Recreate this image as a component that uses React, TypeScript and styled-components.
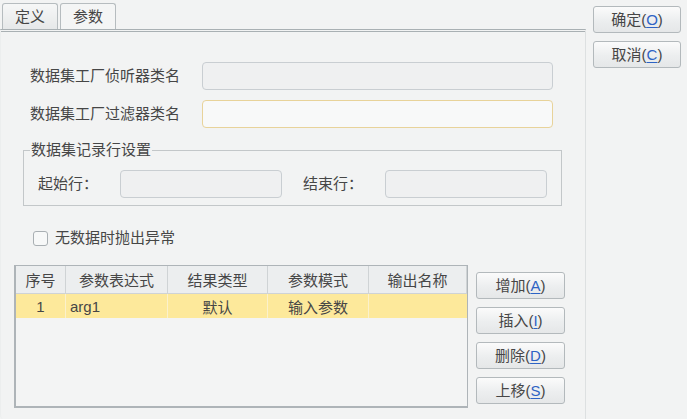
import React from "react"
import styled, { createGlobalStyle, css } from "styled-components"

const GlobalStyle = createGlobalStyle`
  html, body {
    margin: 0;
    padding: 0;
    background: #f2f3f3;
  }
  body {
    font-family: "Liberation Sans", "Noto Sans CJK SC", sans-serif;
    font-size: 15px;
    color: #464646;
  }
`

const Window = styled.div`
  display: flex;
  width: 687px;
  height: 419px;
  overflow: hidden;
`

const Main = styled.div`
  width: 586px;
  display: flex;
  flex-direction: column;
`

const TabStrip = styled.div`
  display: flex;
  gap: 2px;
  padding: 3px 0 0 2px;
  height: 26px;
`

const Tab = styled.div<{ $active?: boolean }>`
  height: 26px;
  padding: 0 12px;
  display: flex;
  align-items: center;
  box-sizing: border-box;
  border: 1px solid #b6bcbf;
  border-bottom: none;
  border-radius: 3px 3px 0 0;
  line-height: 1;
  background: ${p => p.$active ? "#f4f5f5" : "linear-gradient(#f6f7f7, #e6e8e9)"};
`

const Panel = styled.div`
  flex: 1;
  border-top: 3px double #a9b0b3;
  border-right: 1px solid #dde0e1;
  border-left: 1px solid #eceeee;
  border-bottom-left-radius: 4px;
  box-sizing: border-box;
  display: flex;
  flex-direction: column;
`

const FieldRow = styled.div<{ $top: number }>`
  display: flex;
  align-items: center;
  margin-top: ${p => p.$top}px;
  padding-left: 29px;
`

const Label = styled.span<{ $width: number; $gap?: number }>`
  width: ${p => p.$width}px;
  margin-left: ${p => p.$gap || 0}px;
  line-height: 18px;
  white-space: nowrap;
`

const fieldBase = css`
  height: 28px;
  box-sizing: border-box;
  border-radius: 4px;
`

const TextField = styled.div<{ $width: number; $focus?: boolean }>`
  ${fieldBase};
  width: ${p => p.$width}px;
  border: 1px solid ${p => p.$focus ? "#e8d39a" : "#c9ced2"};
  background: ${p => p.$focus ? "#f8f9f9" : "#eff0f1"};
`

const Group = styled.fieldset`
  margin: 14px 0 0 22px;
  width: 539px;
  height: 64px;
  box-sizing: border-box;
  border: 1px solid #c3c7c9;
  padding: 12px 0 0 14px;
  display: flex;
  align-items: center;
`

const Legend = styled.legend`
  padding: 0 1px;
  margin-left: -8px;
  line-height: 16px;
`

const CheckRow = styled.label`
  display: flex;
  align-items: center;
  gap: 7px;
  margin: 23px 0 0 32px;
  line-height: 18px;
`

const CheckBox = styled.span`
  width: 15px;
  height: 15px;
  box-sizing: border-box;
  border: 1px solid #a9afb3;
  border-radius: 3px;
  background: #f7f8f8;
`

const TableArea = styled.div`
  display: flex;
  gap: 8px;
  margin: 18px 0 0 13px;
`

const Table = styled.div`
  width: 454px;
  height: 143px;
  box-sizing: border-box;
  border: 1px solid #aeb4b8;
  border-left-width: 2px;
  border-bottom-width: 2px;
  background: #f3f4f4;
`

const Grid = styled.div`
  display: grid;
  grid-template-columns: 50px 102px 100px 101px 1fr;
`

const HeadCell = styled.div`
  height: 27px;
  display: flex;
  align-items: center;
  justify-content: center;
  background: #eceeef;
  border-right: 1px solid #cfd3d5;
  border-bottom: 1px solid #cfd3d5;
  &:last-child { border-right: none; }
`

const Cell = styled.div<{ $align?: string }>`
  height: 24px;
  display: flex;
  align-items: center;
  justify-content: ${p => p.$align || "center"};
  padding-left: ${p => p.$align === "flex-start" ? "4px" : "0"};
  background: #fde99b;
  border-right: 1px solid #fbf1cc;
  &:last-child { border-right: none; }
`

const SideButtons = styled.div`
  display: flex;
  flex-direction: column;
  gap: 8px;
  margin-top: 7px;
`

const Button = styled.button<{ $width?: number }>`
  width: ${p => p.$width || 89}px;
  height: 27px;
  box-sizing: border-box;
  border: 1px solid #b3b9bc;
  border-radius: 3px;
  background: linear-gradient(#fbfbfb, #eceeef 55%, #e5e7e8);
  font-family: inherit;
  font-size: 15px;
  color: #464646;
  padding: 0;
  line-height: 1;
  cursor: pointer;
`

const Key = styled.span`
  color: #2d63c4;
  text-decoration: underline;
  text-underline-offset: 2px;
`

const Actions = styled.div`
  display: flex;
  flex-direction: column;
  gap: 8px;
  padding: 6px 0 0 7px;
`

const ButtonLabel = ({ text, mnemonic }: { text: string; mnemonic: string }) => (
  <>{text}(<Key>{mnemonic}</Key>)</>
)

const columns = ["序号", "参数表达式", "结果类型", "参数模式", "输出名称"]

const App = () => {
  return (
    <Window>
      <GlobalStyle />
      <Main>
        <TabStrip>
          <Tab>定义</Tab>
          <Tab $active>参数</Tab>
        </TabStrip>
        <Panel>
          <FieldRow $top={30}>
            <Label $width={172}>数据集工厂侦听器类名</Label>
            <TextField $width={351} />
          </FieldRow>
          <FieldRow $top={10}>
            <Label $width={172}>数据集工厂过滤器类名</Label>
            <TextField $width={351} $focus />
          </FieldRow>
          <Group>
            <Legend>数据集记录行设置</Legend>
            <Label $width={82}>起始行：</Label>
            <TextField $width={162} />
            <Label $width={82} $gap={21}>结束行：</Label>
            <TextField $width={162} />
          </Group>
          <CheckRow>
            <CheckBox />
            无数据时抛出异常
          </CheckRow>
          <TableArea>
            <Table>
              <Grid>
                {columns.map(c => <HeadCell key={c}>{c}</HeadCell>)}
                <Cell>1</Cell>
                <Cell $align="flex-start">arg1</Cell>
                <Cell>默认</Cell>
                <Cell>输入参数</Cell>
                <Cell />
              </Grid>
            </Table>
            <SideButtons>
              <Button><ButtonLabel text="增加" mnemonic="A" /></Button>
              <Button><ButtonLabel text="插入" mnemonic="I" /></Button>
              <Button><ButtonLabel text="删除" mnemonic="D" /></Button>
              <Button><ButtonLabel text="上移" mnemonic="S" /></Button>
            </SideButtons>
          </TableArea>
        </Panel>
      </Main>
      <Actions>
        <Button $width={88}><ButtonLabel text="确定" mnemonic="O" /></Button>
        <Button $width={88}><ButtonLabel text="取消" mnemonic="C" /></Button>
      </Actions>
    </Window>
  )
}

export default App
